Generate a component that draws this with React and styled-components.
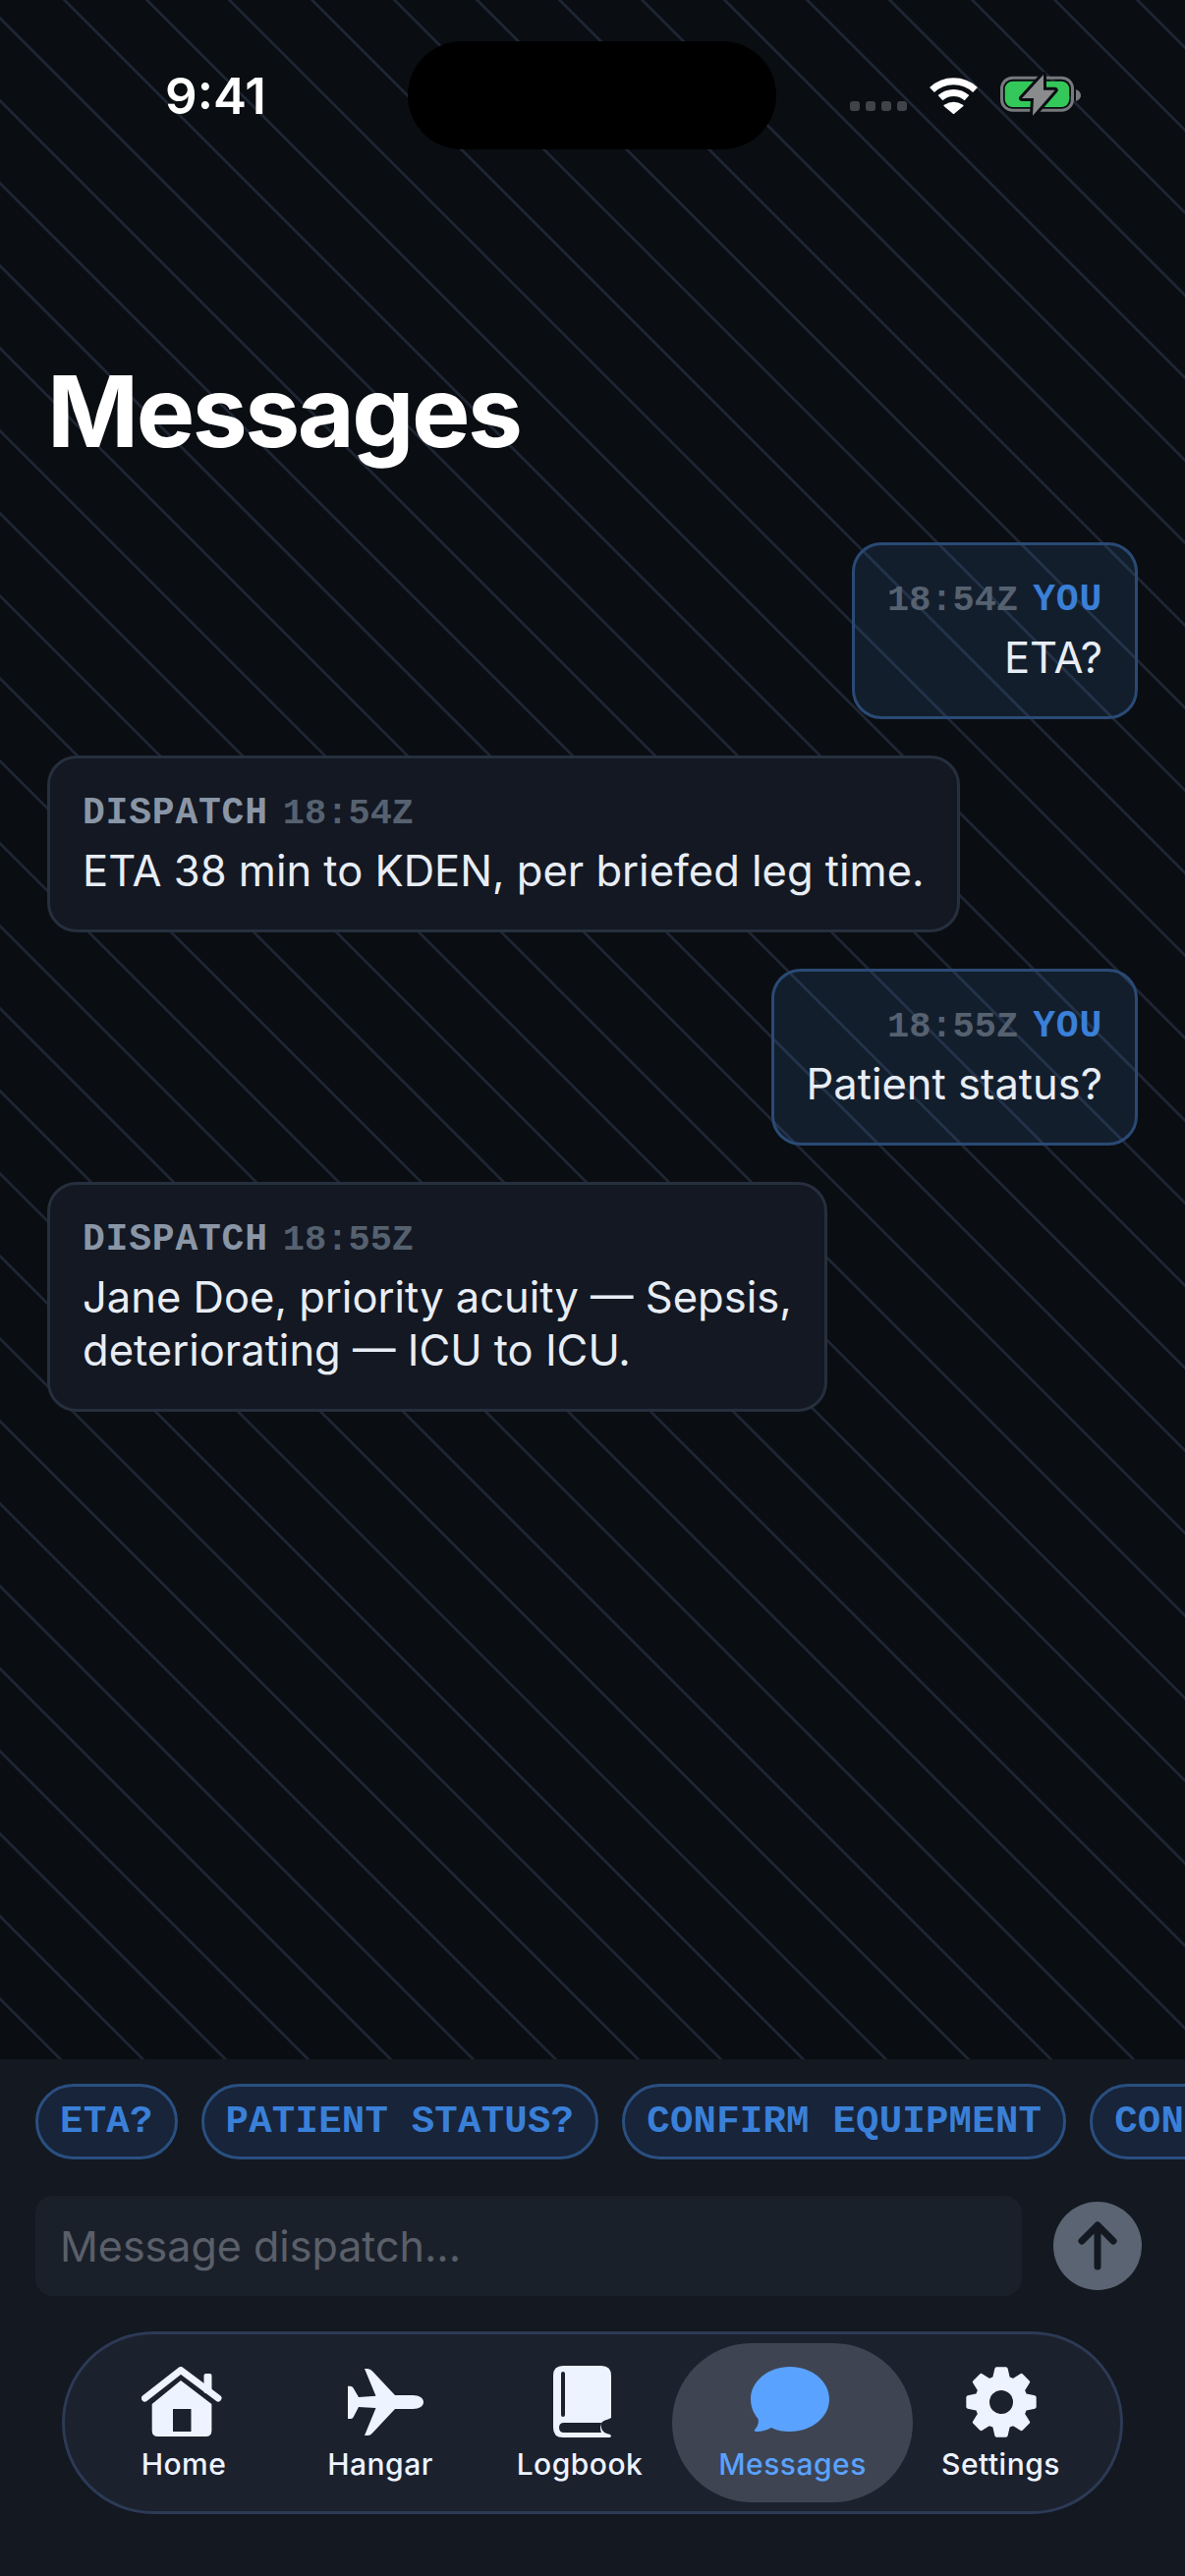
import React from 'react';
import styled, { createGlobalStyle } from 'styled-components';

const GlobalStyle = createGlobalStyle`
    html, body {
        margin: 0;
        padding: 0;
        background: #0a0d12;
    }
    * {
        box-sizing: border-box;
    }
`;

const Screen = styled.div`
    width: 1206px;
    height: 2622px;
    display: flex;
    flex-direction: column;
    overflow: hidden;
    font-family: Inter, "Liberation Sans", sans-serif;
    color: #e8edf5;
    background-color: #0a0d12;
    background-image: repeating-linear-gradient(
        45deg,
        #1d2532 0 1px,
        transparent 1px 57.9px,
        #1d2532 57.9px 59.397px
    );
`;

const StatusBar = styled.div`
    display: flex;
    align-items: center;
    height: 110px;
    margin-top: 42px;
    flex-shrink: 0;
`;
const StatusLeft = styled.div`
    width: 415px;
    padding-left: 24px;
    text-align: center;
    font-size: 51px;
    font-weight: 600;
    color: #fff;
`;
const Island = styled.div`
    width: 375px;
    height: 110px;
    border-radius: 55px;
    background: #000;
`;
const StatusRight = styled.div`
    display: flex;
    align-items: center;
    padding-left: 75px;
`;
const SignalDots = styled.div`
    display: flex;
    gap: 6px;
    margin: 22px 22px 0 0;
`;
const SignalDot = styled.span`
    width: 10px;
    height: 10px;
    border-radius: 3px;
    background: #404348;
`;
const WifiIcon = styled.svg`
    width: 51px;
    height: 37px;
    margin-right: 20px;
`;
const BatteryIcon = styled.svg`
    width: 86px;
    height: 44px;
    overflow: visible;
`;

const Title = styled.h1`
    margin: 205px 0 71px 48px;
    font-size: 100px;
    line-height: 124px;
    font-weight: 700;
    letter-spacing: -2.5px;
    color: #fff;
`;

const Thread = styled.div`
    flex: 1;
    display: flex;
    flex-direction: column;
    gap: 37px;
    padding: 0 48px;
`;
const Bubble = styled.div`
    align-self: ${p => (p.$mine ? 'flex-end' : 'flex-start')};
    display: flex;
    flex-direction: column;
    align-items: ${p => (p.$mine ? 'flex-end' : 'flex-start')};
    padding: 33px;
    border-radius: 30px;
    border: 3px solid ${p => (p.$mine ? '#2a4a75' : '#262f3d')};
    background: ${p => (p.$mine ? 'rgba(60, 110, 170, 0.18)' : '#131822')};
    text-align: ${p => (p.$mine ? 'right' : 'left')};
`;
const Meta = styled.div`
    display: flex;
    align-items: baseline;
    gap: 15px;
    height: 46px;
    margin-bottom: 8px;
    font-family: "Liberation Mono", monospace;
    line-height: 46px;
    font-weight: 700;
`;
const Sender = styled.span`
    font-size: 38px;
    letter-spacing: 0.8px;
    color: ${p => (p.$mine ? '#3a80d8' : '#8a96a6')};
`;
const Time = styled.span`
    font-size: 37px;
    color: #566170;
`;
const Body = styled.div`
    font-size: 43.5px;
    line-height: 54px;
    color: #e8edf5;
`;

const Composer = styled.div`
    flex-shrink: 0;
    height: 526px;
    padding-top: 25px;
    background: #131821;
`;
const Chips = styled.div`
    display: flex;
    gap: 24px;
    padding-left: 36px;
    overflow: hidden;
`;
const Chip = styled.div`
    flex-shrink: 0;
    height: 77px;
    padding: 0 22px;
    display: flex;
    align-items: center;
    border-radius: 39px;
    border: 3px solid #2a4f80;
    background: #17243a;
    color: #3a80d8;
    font-family: "Liberation Mono", monospace;
    font-size: 39px;
    font-weight: 700;
    letter-spacing: 0.24px;
    white-space: nowrap;
`;
const InputRow = styled.div`
    display: flex;
    align-items: center;
    gap: 32px;
    margin-top: 37px;
    padding: 0 44px 0 36px;
`;
const Input = styled.div`
    flex: 1;
    height: 102px;
    padding-left: 25px;
    display: flex;
    align-items: center;
    border-radius: 18px;
    background: #1a202a;
    font-size: 43px;
    color: #5a5f69;
`;
const SendButton = styled.div`
    width: 90px;
    height: 90px;
    display: flex;
    align-items: center;
    justify-content: center;
    border-radius: 50%;
    background: #5a6472;
`;

const TabBar = styled.nav`
    display: flex;
    width: 1080px;
    height: 186px;
    margin: 36px 0 0 63px;
    padding: 9px 0 9px 30px;
    border-radius: 93px;
    border: 3px solid #2c3a55;
    background: #1c212e;
`;
const Tab = styled.div`
    width: ${p => p.$w}px;
    height: 162px;
    padding-top: 23px;
    display: flex;
    flex-direction: column;
    align-items: center;
    border-radius: 81px;
    background: ${p => (p.$active ? '#3e4452' : 'transparent')};
    color: ${p => (p.$active ? '#5aa2ff' : '#edf3ff')};
`;
const IconBox = styled.div`
    height: 74px;
    display: flex;
    align-items: center;
    justify-content: center;
`;
const TabLabel = styled.div`
    margin-top: 8px;
    font-size: 30px;
    line-height: 36px;
    font-weight: 500;
    letter-spacing: 0.5px;
`;

// gear outline, 8 teeth around the middle of a 90 box
const gearPoints = () => {
    const pts = [];
    for (let i = 0; i < 8; i++) {
        const a = (i * 45 - 90) * Math.PI / 180;
        const at = (r, d) => {
            const t = a + d * Math.PI / 180;
            return `${(45 + r * Math.cos(t)).toFixed(2)},${(45 + r * Math.sin(t)).toFixed(2)}`;
        };
        pts.push(at(25, -16), at(34, -8), at(34, 8), at(25, 16));
    }
    return pts.join(' ');
};

const HomeGlyph = () => (
    <svg width="86" height="72" viewBox="0 0 86 72" fill="currentColor">
        <path d="M3.5 32 L40 3.5 L78 32" fill="none" stroke="currentColor" strokeWidth="7" strokeLinecap="round" strokeLinejoin="round"/>
        <rect x="63.5" y="7" width="8" height="20" rx="2"/>
        <path fillRule="evenodd" d="M40 14 L71.4 38 V65 Q71.4 71 65.4 71 H16.7 Q10.7 71 10.7 65 V38 Z M32 43 V66 H50.5 V43 Z"/>
    </svg>
);
const PlaneGlyph = () => (
    <svg width="87" height="68" viewBox="-10 0 87 68" fill="currentColor">
        <path d="M17 0 H20 Q23 0 25 2.5 L48 27 H66 C73 27 77 30 77 34 C77 38 73 41 66 41 H48 L25 65.5 Q23 68 20 68 H17 L28.5 40 L11 39 L5.5 49.5 Q4.5 51 2.5 51 H0 V17.7 H2.5 Q4.5 17.7 5.5 19.5 L11 29 L28.5 27.7 Z"/>
    </svg>
);
const BookGlyph = () => (
    <svg width="63" height="74" viewBox="9 8 63 74" fill="currentColor">
        <path fillRule="evenodd" d="M23 8 H62 Q72 8 72 18 V61 C66 64 60 64 62 71 C63 75 66 77 71 78 C72.5 79 72 81 70 81 H23 Q13 81 13 71 V18 Q13 8 23 8 Z M23 14 Q21 14 21 16 V58 Q21 60 23 60 Q25 60 25 58 V16 Q25 14 23 14 Z M24 66 Q19 66 19 71 Q19 76 24 76 H62 Q60 71 62 66 Z"/>
    </svg>
);
const ChatGlyph = () => (
    <svg width="86" height="72" viewBox="0 0 86 72" fill="currentColor">
        <path d="M40 0 C62 0 80 14.5 80 33 C80 51.5 62 66 40 66 C33 66 27 65 21 62 C16 65 9 66.5 5 66 C3.5 65.7 3.5 64.5 4.5 63.5 C7 61 8.5 57 7.5 53 C2.5 47 0 40 0 33 C0 14.5 18 0 40 0 Z"/>
    </svg>
);
const GearGlyph = () => (
    <svg width="72" height="72" viewBox="9 9 72 72">
        <polygon points={gearPoints()} fill="currentColor" stroke="currentColor" strokeWidth="4" strokeLinejoin="round"/>
        <circle cx="45" cy="45" r="12" fill="#1c212e"/>
    </svg>
);

const TABS = [
    { label: 'Home', w: 182, icon: <HomeGlyph/> },
    { label: 'Hangar', w: 218, icon: <PlaneGlyph/> },
    { label: 'Logbook', w: 188, icon: <BookGlyph/> },
    { label: 'Messages', w: 245, icon: <ChatGlyph/>, active: true },
    { label: 'Settings', w: 179, icon: <GearGlyph/> },
];

const CHIPS = ['ETA?', 'PATIENT STATUS?', 'CONFIRM EQUIPMENT', 'CONFIRM LANDING'];

const MESSAGES = [
    { id: 1, mine: true, time: '18:54Z', lines: ['ETA?'] },
    { id: 2, mine: false, time: '18:54Z', lines: ['ETA 38 min to KDEN, per briefed leg time.'] },
    { id: 3, mine: true, time: '18:55Z', lines: ['Patient status?'] },
    { id: 4, mine: false, time: '18:55Z', lines: ['Jane Doe, priority acuity — Sepsis,', 'deteriorating — ICU to ICU.'] },
];

//*********************************
const App = () => (
    <Screen>
        <GlobalStyle/>
        <StatusBar>
            <StatusLeft>9:41</StatusLeft>
            <Island/>
            <StatusRight>
                <SignalDots>
                    {[0, 1, 2, 3].map(i => <SignalDot key={i}/>)}
                </SignalDots>
                <WifiIcon viewBox="0 0 51 37">
                    <path d="M3.5 12.5 A32 32 0 0 1 47.5 12.5" fill="none" stroke="#fff" strokeWidth="7"/>
                    <path d="M12 20.7 A20 20 0 0 1 39 20.7" fill="none" stroke="#fff" strokeWidth="7"/>
                    <path d="M25.5 36 L16.5 28.5 Q25.5 23 34.5 28.5 Z" fill="#fff" stroke="#fff" strokeWidth="2" strokeLinejoin="round"/>
                </WifiIcon>
                <BatteryIcon viewBox="0 0 86 44">
                    <rect x="3.5" y="4.2" width="72" height="33" rx="11" fill="none" stroke="#77797c" strokeWidth="3"/>
                    <rect x="6.7" y="7.7" width="65.5" height="26.3" rx="8" fill="#34c759"/>
                    <path d="M79 16 Q84 18 84 22 Q84 26 79 28 Z" fill="#77797c"/>
                    <path d="M46 1 L24 25 H36 L35 42.7 L57.7 16.7 H46 Z" fill="#8a8b8d" stroke="#0a0d12" strokeWidth="6" strokeLinejoin="round" paintOrder="stroke"/>
                </BatteryIcon>
            </StatusRight>
        </StatusBar>

        <Title>Messages</Title>

        <Thread>
            {MESSAGES.map(m => (
                <Bubble key={m.id} $mine={m.mine}>
                    <Meta>
                        {m.mine && <Time>{m.time}</Time>}
                        <Sender $mine={m.mine}>{m.mine ? 'YOU' : 'DISPATCH'}</Sender>
                        {!m.mine && <Time>{m.time}</Time>}
                    </Meta>
                    <Body>
                        {m.lines.map(line => <div key={line}>{line}</div>)}
                    </Body>
                </Bubble>
            ))}
        </Thread>

        <Composer>
            <Chips>
                {CHIPS.map(c => <Chip key={c}>{c}</Chip>)}
            </Chips>
            <InputRow>
                <Input>Message dispatch...</Input>
                <SendButton>
                    <svg width="44" height="54" viewBox="0 0 44 54" fill="none" stroke="#131821" strokeWidth="7" strokeLinecap="round" strokeLinejoin="round">
                        <path d="M22 48 V6 M6 22 L22 6 L38 22"/>
                    </svg>
                </SendButton>
            </InputRow>
            <TabBar>
                {TABS.map(t => (
                    <Tab key={t.label} $w={t.w} $active={t.active}>
                        <IconBox>{t.icon}</IconBox>
                        <TabLabel>{t.label}</TabLabel>
                    </Tab>
                ))}
            </TabBar>
        </Composer>
    </Screen>
);
export default App;
